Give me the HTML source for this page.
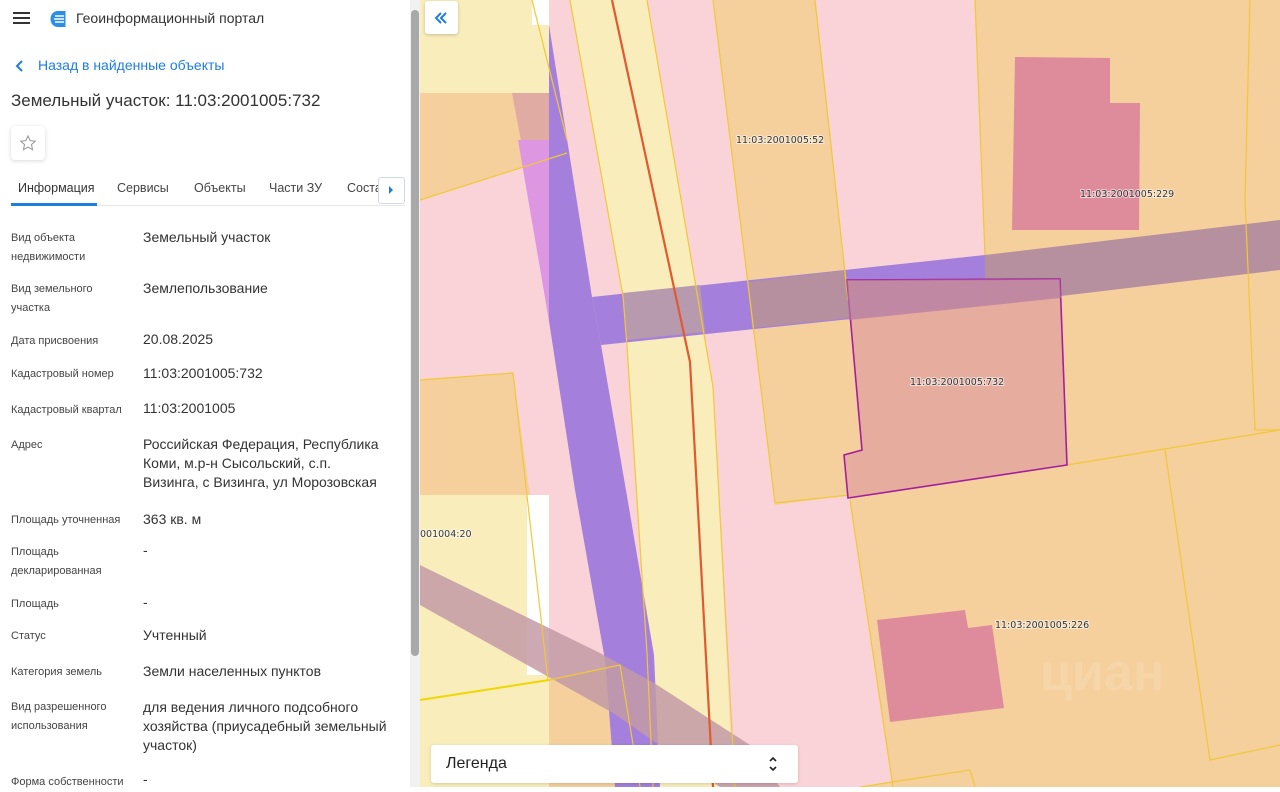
<!DOCTYPE html>
<html><head><meta charset="utf-8"><style>
*{margin:0;padding:0;box-sizing:border-box}
body{width:1280px;height:787px;overflow:hidden;position:relative;font-family:"Liberation Sans",sans-serif;background:#fff;color:#333}
.l{position:absolute;left:11px;font-size:11px;line-height:19px;color:#444;margin-top:1px}
.v{position:absolute;left:143px;font-size:14px;line-height:19px;color:#333;margin-top:1px}
#map{position:absolute;left:420px;top:0}
.lab{font-family:"DejaVu Sans",sans-serif;font-size:9.5px;fill:#333;paint-order:stroke;stroke:#fff;stroke-width:2px;stroke-opacity:.6}
</style></head><body>
<div style="position:absolute;left:0;top:0;width:410px;height:787px;background:#fff">
  <div style="position:absolute;left:13px;top:12px;width:17px;height:2px;background:#333;box-shadow:0 5px 0 #333,0 10px 0 #333"></div>
  <svg style="position:absolute;left:49px;top:10px" width="18" height="18" viewBox="0 0 18 18"><path d="M9 1C4.5 1 1.5 4.5 1.5 9s3 8 7.5 8h7.5V1z" fill="#2b8fe8"/><path d="M6 6h9M5 9h10M6 12h9" stroke="#fff" stroke-width="1.6"/></svg>
  <div style="position:absolute;left:76px;top:10px;font-size:14px;color:#333">Геоинформационный портал</div>
  <svg style="position:absolute;left:15px;top:60px" width="10" height="12"><path d="M7 1L2 6l5 5" stroke="#1e7ee0" stroke-width="2" fill="none"/></svg>
  <div style="position:absolute;left:38px;top:57px;font-size:14px;color:#1e7ee0">Назад в найденные объекты</div>
  <div style="position:absolute;left:11px;top:91px;font-size:17px;color:#333">Земельный участок: 11:03:2001005:732</div>
  <div style="position:absolute;left:11px;top:126px;width:34px;height:34px;border-radius:4px;box-shadow:0 1px 4px rgba(0,0,0,.15);background:#fff"></div>
  <svg style="position:absolute;left:19px;top:134px" width="18" height="18" viewBox="0 0 24 24"><path d="M12 2.5l2.9 6.3 6.8.7-5.1 4.6 1.5 6.8L12 17.4l-6.1 3.5 1.5-6.8-5.1-4.6 6.8-.7z" fill="none" stroke="#999" stroke-width="1.4"/></svg>
  <div style="position:absolute;left:18px;top:181px;font-size:12.5px;color:#333">Информация</div>
  <div style="position:absolute;left:117px;top:181px;font-size:12.5px;color:#444">Сервисы</div>
  <div style="position:absolute;left:194px;top:181px;font-size:12.5px;color:#444">Объекты</div>
  <div style="position:absolute;left:269px;top:181px;font-size:12.5px;color:#444">Части ЗУ</div>
  <div style="position:absolute;left:347px;top:181px;font-size:12.5px;color:#444">Соста</div>
  <div style="position:absolute;left:378px;top:177px;width:27px;height:27px;border:1px solid #cfd8e3;border-radius:3px;background:#fff"></div>
  <svg style="position:absolute;left:388px;top:186px" width="6" height="8"><path d="M1 0l4 4-4 4z" fill="#1e7ee0"/></svg>
  <div style="position:absolute;left:11px;top:205px;width:394px;height:1px;background:#e6e6e6"></div>
  <div style="position:absolute;left:11px;top:203px;width:86px;height:3px;background:#1e7ee0"></div>

  <div class="l" style="top:228px">Вид объекта<br>недвижимости</div><div class="v" style="top:227px">Земельный участок</div>
  <div class="l" style="top:279px">Вид земельного<br>участка</div><div class="v" style="top:278px">Землепользование</div>
  <div class="l" style="top:331px">Дата присвоения</div><div class="v" style="top:329px">20.08.2025</div>
  <div class="l" style="top:364px">Кадастровый номер</div><div class="v" style="top:363px">11:03:2001005:732</div>
  <div class="l" style="top:400px">Кадастровый квартал</div><div class="v" style="top:398px">11:03:2001005</div>
  <div class="l" style="top:435px">Адрес</div><div class="v" style="top:434px">Российская Федерация, Республика<br>Коми, м.р-н Сысольский, с.п.<br>Визинга, с Визинга, ул Морозовская</div>
  <div class="l" style="top:510px">Площадь уточненная</div><div class="v" style="top:509px">363 кв. м</div>
  <div class="l" style="top:542px">Площадь<br>декларированная</div><div class="v" style="top:540px">-</div>
  <div class="l" style="top:594px">Площадь</div><div class="v" style="top:592px">-</div>
  <div class="l" style="top:626px">Статус</div><div class="v" style="top:625px">Учтенный</div>
  <div class="l" style="top:662px">Категория земель</div><div class="v" style="top:661px">Земли населенных пунктов</div>
  <div class="l" style="top:697px">Вид разрешенного<br>использования</div><div class="v" style="top:697px">для ведения личного подсобного<br>хозяйства (приусадебный земельный<br>участок)</div>
  <div class="l" style="top:772px">Форма собственности</div><div class="v" style="top:769px">-</div>
</div>
<div style="position:absolute;left:410px;top:0;width:10px;height:787px;background:#f1f1f1"></div>
<div style="position:absolute;left:411px;top:10px;width:8px;height:646px;background:#a8a8a8;border-radius:4px"></div>

<svg id="map" width="860" height="787" viewBox="420 0 860 787">
<rect x="420" y="0" width="860" height="787" fill="#f9d3d7"/>
<rect x="420" y="0" width="129" height="93" fill="#f9edbb"/>
<rect x="532" y="0" width="17" height="25" fill="#fff"/>
<polygon points="420,93 549,93 567,153 420,200" fill="#f5cf9c"/>
<polygon points="512,93 549,93 567,153 525,162" fill="#e0aba3"/>
<polygon points="420,380 513,373 530,495 420,495" fill="#f5cf9c"/>
<polygon points="420,495 549,495 549,787 420,787" fill="#f9edbb"/>
<rect x="527" y="495" width="22" height="180" fill="#fff"/>
<polygon points="549,680 620,665 640,787 549,787" fill="#f5cf9c"/>
<polygon points="570,0 647,0 713,387 733,787 653,787 647,653 627,346 623,296" fill="#f9edbb"/>
<polygon points="713,0 815,0 848,300 850,495 775,505" fill="#f5cf9c"/>
<polygon points="975,0 1280,0 1280,787 893,787 850,500 848,280 985,270" fill="#f5cf9c"/>
<polygon points="860,787 975,770 975,787" fill="#f5cf9c"/>
<polygon points="518,140 549,140 549,321" fill="#dc96e2"/>
<polygon points="549,25 592,297 601,345 628,502 654,655 660,787 615,787 605,660 575,490 549,321" fill="#a47fdc"/>
<polygon points="420,565 600,653 654,683 750,745 780,787 720,787 613,713 420,605" fill="#c39aa6" opacity=".85"/>
<polygon points="592,297 985,255 985,305 601,345" fill="#a47fdc"/>
<polygon points="985,255 1280,220 1280,270 985,305" fill="#b7909f"/>
<polygon points="623,293 700,285 705,332 627,340" fill="#b89aae"/>
<polygon points="748,282 846,270 850,318 752,328" fill="#b7909f"/>
<g fill="none" stroke="#f0c838" stroke-width="1.2">
<path d="M570,0 L623,296 L627,346 L647,653 L653,787"/><path d="M647,0 L713,387 L735,787"/>
<path d="M713,0 L775,503 L850,495"/><path d="M815,0 L848,300"/>
<path d="M975,0 L985,255"/><path d="M1250,0 L1245,200 L1255,430 L1280,430"/>
<path d="M1067,465 L1280,430"/><path d="M850,500 L893,787"/>
<path d="M1165,450 L1210,760 L1280,745"/><path d="M420,380 L513,373 L548,680"/>
<path d="M420,200 L567,153"/><path d="M549,680 L620,665 L640,787"/>
<path d="M860,787 L970,770 L975,787"/>
<path d="M532,0 L567,140"/>
</g>
<path d="M420,700 L549,680" stroke="#eed800" stroke-width="2"/>
<path d="M612,0 L690,362 L713,787" stroke="#e05a30" stroke-width="2.2" fill="none"/>
<polygon points="1015,57 1110,58 1110,103 1140,103 1139,230 1108,230 1012,230" fill="#de8c9b"/>
<polygon points="877,620 965,610 968,628 992,625 1004,708 890,722" fill="#de8c9b"/>
<polygon points="847,280 1060,279 1067,465 848,498 844,455 862,450" fill="#e4aaa0" fill-opacity=".92" stroke="#a3209c" stroke-width="1.6"/>
<polygon points="847,280 1060,279 1061,298 849,320" fill="#b37aa3" opacity=".7"/>
<text class="lab" x="736" y="143">11:03:2001005:52</text>
<text class="lab" x="1080" y="197">11:03:2001005:229</text>
<text class="lab" x="910" y="385">11:03:2001005:732</text>
<text class="lab" x="995" y="628">11:03:2001005:226</text>
<text class="lab" x="420" y="537">001004:20</text>
<text x="1040" y="690" font-size="52" font-weight="bold" fill="#fff" opacity=".12" font-family="Liberation Sans">циан</text>
</svg>
<div style="position:absolute;left:425px;top:1px;width:33px;height:33px;background:#fff;border-radius:3px;box-shadow:0 1px 3px rgba(0,0,0,.2)"></div>
<svg style="position:absolute;left:433px;top:10px" width="16" height="16"><path d="M8 3L3 8l5 5M13 3L8 8l5 5" stroke="#1e7ee0" stroke-width="2" fill="none"/></svg>
<div style="position:absolute;left:431px;top:745px;width:367px;height:38px;background:#fff;border-radius:3px;box-shadow:0 1px 3px rgba(0,0,0,.15)"></div>
<div style="position:absolute;left:446px;top:755px;font-size:16px;color:#222">Легенда</div>
<svg style="position:absolute;left:768px;top:755px" width="10" height="18"><path d="M2 6l3-3 3 3M2 12l3 3 3-3" stroke="#222" stroke-width="1.6" fill="none"/></svg>
</body></html>
